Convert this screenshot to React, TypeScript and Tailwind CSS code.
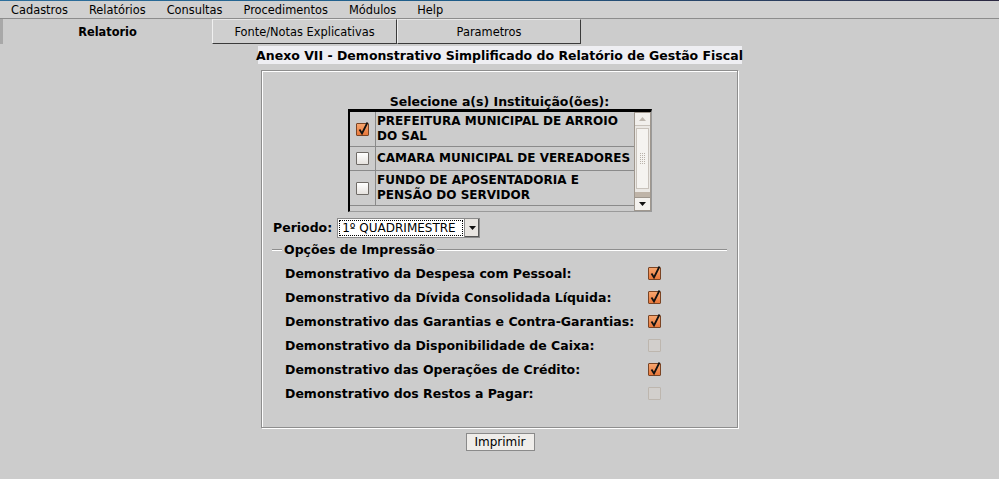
import React from 'react';

const menus = ['Cadastros', 'Relatórios', 'Consultas', 'Procedimentos', 'Módulos', 'Help'];

const opcoes = [
  { label: 'Demonstrativo da Despesa com Pessoal:', checked: true, enabled: true },
  { label: 'Demonstrativo da Dívida Consolidada Líquida:', checked: true, enabled: true },
  { label: 'Demonstrativo das Garantias e Contra-Garantias:', checked: true, enabled: true },
  { label: 'Demonstrativo da Disponibilidade de Caixa:', checked: false, enabled: false },
  { label: 'Demonstrativo das Operações de Crédito:', checked: true, enabled: true },
  { label: 'Demonstrativo dos Restos a Pagar:', checked: false, enabled: false },
];

const instituicoes = [
  { lines: ['PREFEITURA MUNICIPAL DE ARROIO', 'DO SAL'], checked: true },
  { lines: ['CAMARA MUNICIPAL DE VEREADORES'], checked: false },
  { lines: ['FUNDO DE APOSENTADORIA E', 'PENSÃO DO SERVIDOR'], checked: false },
];

const Check = ({ checked, enabled = true }: { checked: boolean; enabled?: boolean }) => {
  if (!enabled) {
    return <span className="block w-[13px] h-[13px] border border-[#bdb6ae] bg-[#d2cfcc] rounded-[1px]" />;
  }
  if (!checked) {
    return <span className="block w-[13px] h-[13px] border border-[#6e6a66] bg-gradient-to-b from-white to-[#e6e3df] rounded-[1px]" />;
  }
  return (
    <span className="relative block w-[13px] h-[13px] border border-[#7a4424] bg-gradient-to-b from-[#f6a56e] to-[#e9783a] rounded-[1px]">
      <svg className="absolute -top-[3px] left-0" width="14" height="15" viewBox="0 0 14 15">
        <path d="M2.5 8.5 L5 12.5 L10.5 1.5" fill="none" stroke="#111" strokeWidth="1.8" />
      </svg>
    </span>
  );
};

export default function App() {
  return (
    <div className="w-[999px] h-[479px] bg-[#cccccc] text-black overflow-hidden whitespace-nowrap" style={{ fontFamily: '"DejaVu Sans", sans-serif' }}>
      <div className="h-px bg-gradient-to-r from-[#2d6f9c] via-[#1c5a86] to-[#2a2740]" />
      <div className="h-[18px] pt-[2px] bg-[#d0d0d0] border-b border-[#8c8c8c] flex items-center text-[11.4px] pl-[11px] gap-[21px] leading-none">
        {menus.map((m) => (
          <span key={m}>{m}</span>
        ))}
      </div>
      <div className="h-[25px] flex text-[11.4px] leading-none">
        <div className="w-[212px] pt-[2px] flex items-center justify-center font-bold border-l-[3px] border-[#a8a8a8] bg-[#cccccc]">
          Relatorio
        </div>
        <div className="w-[185px] pt-[2px] flex items-center justify-center bg-[#cfcfcf] border-t border-l border-t-[#e8e8e8] border-l-[#f0f0f0] border-r border-b border-r-[#3a3a3a] border-b-[#3a3a3a]">
          Fonte/Notas Explicativas
        </div>
        <div className="w-[184px] pt-[2px] flex items-center justify-center bg-[#cfcfcf] border-t border-l border-t-[#e8e8e8] border-l-[#f0f0f0] border-r border-b border-r-[#3a3a3a] border-b-[#3a3a3a]">
          Parametros
        </div>
      </div>

      <div className="flex flex-col items-center pt-[2px]">
        <div className="w-[484px] h-[18px] pt-[2px] bg-[#eeeef2] flex items-center justify-center font-bold text-[12.5px] leading-none">
          Anexo VII - Demonstrativo Simplificado do Relatório de Gestão Fiscal
        </div>

        <div className="mt-[6px] w-[477px] h-[358px] border border-[#8e8e8e] shadow-[inset_1px_1px_0_#fff,1px_1px_0_#fff] flex flex-col">
          <div className="pt-[23px] text-center font-bold text-[12.5px] leading-[15px]">Selecione a(s) Instituição(ões):</div>

          <div className="self-center ml-[1px] w-[304px] h-[103px] border-t-[3px] border-l-[2px] border-black border-r border-b border-r-[#9a9a9a] border-b-[#9a9a9a] flex bg-[#cccccc]">
            <div className="flex-1 flex flex-col">
              {instituicoes.map((it, i) => (
                <div key={i} className="flex border-b border-[#8a8a8a]">
                  <div className="w-[26px] flex items-center justify-center border-r border-[#8a8a8a]">
                    <Check checked={it.checked} />
                  </div>
                  <div className="flex-1 py-[2px] pl-[1px] font-bold text-[12px] leading-[15px] min-h-[23px] flex flex-col justify-center">
                    {it.lines.map((l) => (
                      <span key={l}>{l}</span>
                    ))}
                  </div>
                </div>
              ))}
            </div>
            <div className="w-[17px] flex flex-col border border-[#9f978e] bg-[#ebe8e4]">
              <div className="h-[13px] flex items-center justify-center border-b border-[#c8c2bb] bg-[#f1efec]">
                <svg width="7" height="4" viewBox="0 0 7 4"><path d="M0 4 L3.5 0 L7 4Z" fill="#bdb6ae" /></svg>
              </div>
              <div className="flex-1 mt-[2px] mx-[1px] border border-[#c9c3bc] bg-[#f5f3f0] flex items-center justify-center">
                <div className="grid grid-cols-3 gap-[1px]">
                  {Array.from({ length: 18 }).map((_, i) => (
                    <span key={i} className="w-px h-px bg-[#b8b1a9]" />
                  ))}
                </div>
              </div>
              <div className="h-[5px] bg-[#bfb4a8] mt-[3px]" />
              <div className="h-[13px] flex items-center justify-center border-t border-[#9f978e] bg-[#f4f2ef]">
                <svg width="7" height="4" viewBox="0 0 7 4"><path d="M0 0 L3.5 4 L7 0Z" fill="#111" /></svg>
              </div>
            </div>
          </div>

          <div className="mt-[6px] pl-[11px] flex items-center gap-[5px]">
            <span className="font-bold text-[12.5px] leading-none">Periodo:</span>
            <div className="w-[143px] h-[20px] flex border border-[#8a8a8a] bg-white">
              <div className="flex-1 m-[1px] border border-dotted border-black flex items-center pl-[2px] text-[12px] leading-none">
                1º QUADRIMESTRE
              </div>
              <div className="w-[15px] flex items-center justify-center bg-[#e8e5e1] border-l border-[#8a8a8a] shadow-[inset_-1px_-1px_0_#555]">
                <svg width="7" height="4" viewBox="0 0 7 4"><path d="M0 0 L3.5 4 L7 0Z" fill="#111" /></svg>
              </div>
            </div>
          </div>

          <div className="mt-[4px] mx-[10px] flex items-center">
            <div className="w-[10px] h-px bg-[#8e8e8e] shadow-[0_1px_0_#fff]" />
            <span className="px-[2px] font-bold text-[12.5px] leading-[15px]">Opções de Impressão</span>
            <div className="flex-1 h-px bg-[#8e8e8e] shadow-[0_1px_0_#fff]" />
          </div>

          <div className="mt-[9px] pl-[23px] flex flex-col gap-[9px]">
            {opcoes.map((o) => (
              <div key={o.label} className="flex items-center h-[15px]">
                <span className="w-[363px] font-bold text-[12.5px] leading-[15px]">{o.label}</span>
                <Check checked={o.checked} enabled={o.enabled} />
              </div>
            ))}
          </div>
        </div>

        <button className="mt-[5px] ml-[1px] w-[69px] h-[18px] bg-[#efedea] border border-[#8a8a8a] text-[12px] leading-none flex items-center justify-center">
          Imprimir
        </button>
      </div>
    </div>
  );
}
